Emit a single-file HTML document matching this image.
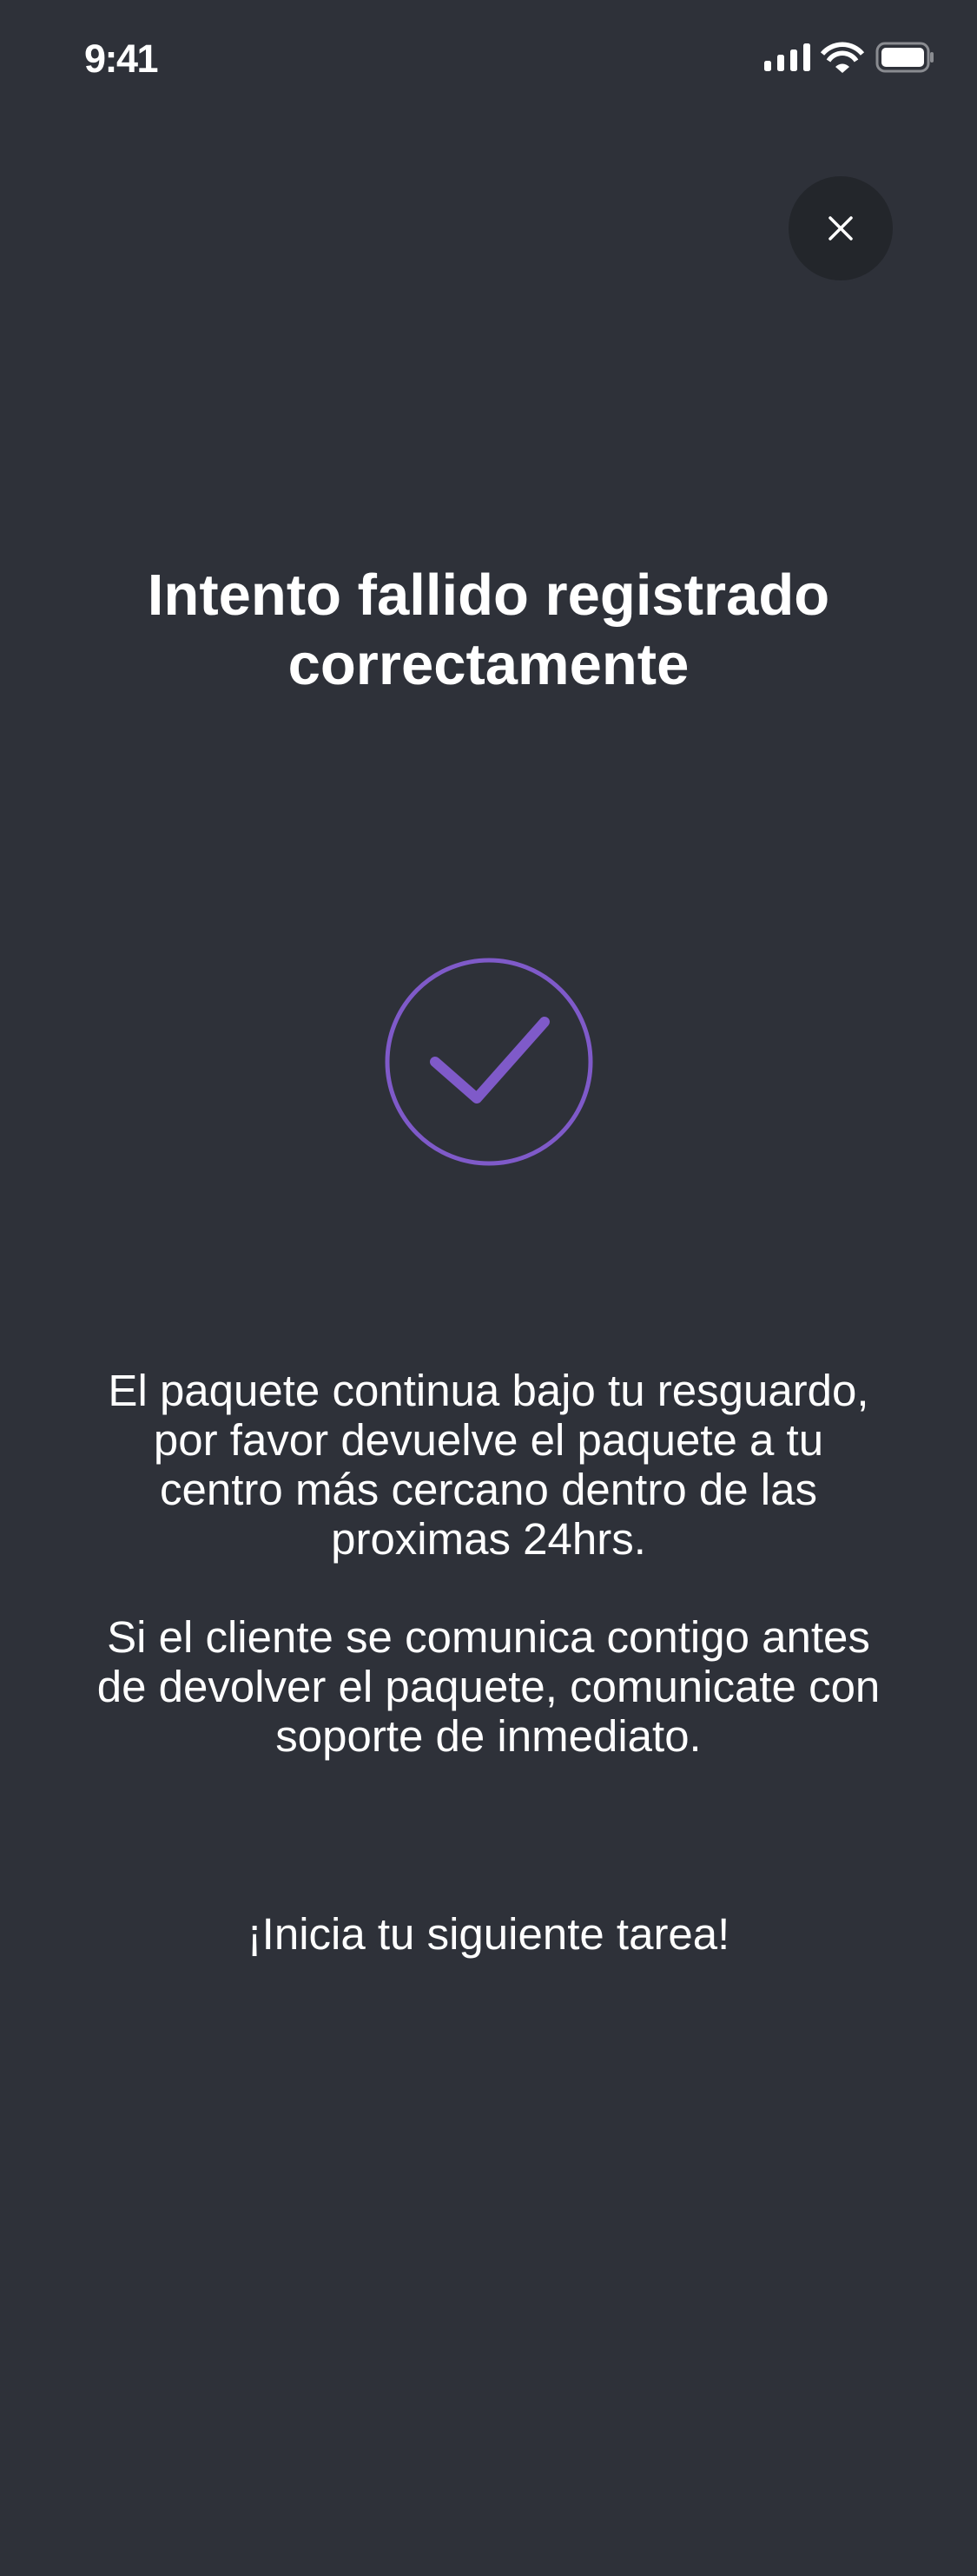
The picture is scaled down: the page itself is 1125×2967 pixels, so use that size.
<!DOCTYPE html>
<html><head><meta charset="utf-8"><style>
html,body{margin:0;padding:0;}
body{width:1125px;height:2967px;background:#2e3139;position:relative;overflow:hidden;font-family:"Liberation Sans",sans-serif;color:#fff;}
.t{position:absolute;left:0;width:1125px;text-align:center;}
</style></head><body>
<div style="position:absolute;left:97px;top:42px;font-size:45px;font-weight:600;letter-spacing:-1.5px;">9:41</div>
<svg style="position:absolute;left:0;top:0" width="1125" height="100">
<rect x="880" y="70" width="8" height="12" rx="2.5" fill="#fff"/>
<rect x="895" y="63" width="8" height="19" rx="2.5" fill="#fff"/>
<rect x="910" y="57" width="8" height="25" rx="2.5" fill="#fff"/>
<rect x="925" y="50" width="8" height="32" rx="2.5" fill="#fff"/>
<path d="M947 62 A30 30 0 0 1 993 62" stroke="#fff" stroke-width="5.5" fill="none"/>
<path d="M954 70 A19 19 0 0 1 986 70" stroke="#fff" stroke-width="5.5" fill="none"/>
<path d="M962 77 L970 84 L978 77 A11 11 0 0 0 962 77Z" fill="#fff"/>
<rect x="1010" y="50" width="59" height="32" rx="9" stroke="#8a8c91" stroke-width="3" fill="none"/>
<rect x="1015" y="55" width="49" height="22" rx="5" fill="#fff"/>
<rect x="1071" y="60" width="4" height="12" rx="2" fill="#8a8c91"/>
</svg>
<div style="position:absolute;left:908px;top:203px;width:120px;height:120px;border-radius:50%;background:#23262b;"></div>
<svg style="position:absolute;left:952px;top:247px" width="32" height="32" viewBox="0 0 32 32"><path d="M4 4 L28 28 M28 4 L4 28" stroke="#fff" stroke-width="3.5" stroke-linecap="round"/></svg>
<div class="t" style="top:646px;font-size:67px;font-weight:700;line-height:80px;">Intento fallido registrado<br>correctamente</div>
<svg style="position:absolute;left:0;top:0" width="1125" height="1400">
<circle cx="563" cy="1223" r="117" stroke="#7f5ac9" stroke-width="5" fill="none"/>
<path d="M501 1223 L549 1265 L627 1177" stroke="#7f5ac9" stroke-width="12" fill="none" stroke-linecap="round" stroke-linejoin="round"/>
</svg>
<div class="t" style="top:1573px;font-size:51px;line-height:57px;">El paquete continua bajo tu resguardo,<br>por favor devuelve el paquete a tu<br>centro más cercano dentro de las<br>proximas 24hrs.</div>
<div class="t" style="top:1857px;font-size:51px;line-height:57px;">Si el cliente se comunica contigo antes<br>de devolver el paquete, comunicate con<br>soporte de inmediato.</div>
<div class="t" style="top:2199px;font-size:51px;line-height:57px;">¡Inicia tu siguiente tarea!</div>
</body></html>
